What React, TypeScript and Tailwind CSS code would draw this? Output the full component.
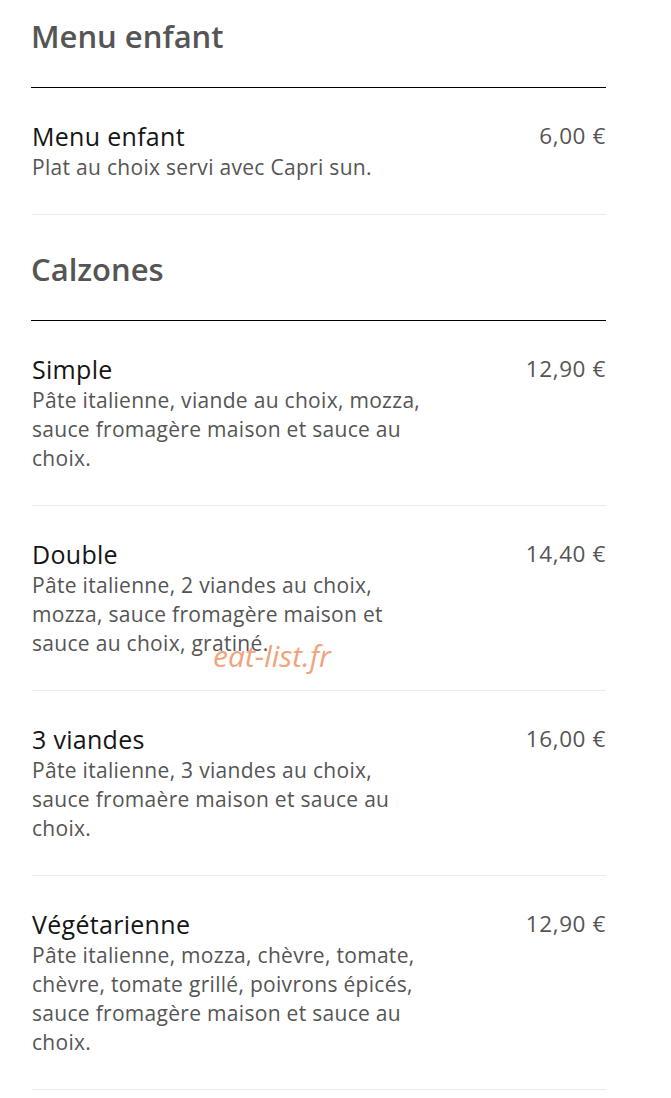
import React from "react";

type Item = { name: string; desc: string; price: string; mark?: boolean };

const sections: { title: string; items: Item[] }[] = [
  {
    title: "Menu enfant",
    items: [{ name: "Menu enfant", desc: "Plat au choix servi avec Capri sun.", price: "6,00 €" }],
  },
  {
    title: "Calzones",
    items: [
      {
        name: "Simple",
        desc: "Pâte italienne, viande au choix, mozza, sauce fromagère maison et sauce au choix.",
        price: "12,90 €",
      },
      {
        name: "Double",
        desc: "Pâte italienne, 2 viandes au choix, mozza, sauce fromagère maison et sauce au choix, gratiné.",
        price: "14,40 €",
        mark: true,
      },
      {
        name: "3 viandes",
        desc: "Pâte italienne, 3 viandes au choix, sauce fromaère maison et sauce au choix.",
        price: "16,00 €",
      },
      {
        name: "Végétarienne",
        desc: "Pâte italienne, mozza, chèvre, tomate, chèvre, tomate grillé, poivrons épicés, sauce fromagère maison et sauce au choix.",
        price: "12,90 €",
      },
    ],
  },
];

export default function App() {
  return (
    <div
      className="w-[671px] min-h-[1098px] bg-white pl-[32px] pr-[65px]"
      style={{ fontFamily: '"Open Sans", "Noto Sans", sans-serif' }}
    >
      {sections.map((s, i) => (
        <section key={s.title}>
          <h2
            className={`${i === 0 ? "pt-[18px]" : "pt-[36px]"} pb-[33px] border-b border-black text-[31px] leading-[36px] font-semibold text-[#555] -ml-[1px]`}
          >
            {s.title}
          </h2>
          {s.items.map((it) => (
            <div key={it.name} className="relative flex justify-between border-b border-[#ebebeb] pt-[31px] pb-[32px]">
              <div className="w-[400px]">
                <div className="text-[25px] leading-[34px] font-medium tracking-[0.3px] text-[#151515]">{it.name}</div>
                <p className="text-[21px] leading-[29px] tracking-[0.3px] text-[#555]">{it.desc}</p>
              </div>
              <div className="text-[22.5px] leading-[34px] font-medium tracking-[0.6px] text-[#555]">{it.price}</div>
              {it.mark && (
                <span className="absolute left-[181px] top-[127px] text-[30px] italic text-[#ef9a6e] opacity-90">
                  eat-list.fr
                </span>
              )}
            </div>
          ))}
        </section>
      ))}
    </div>
  );
}
